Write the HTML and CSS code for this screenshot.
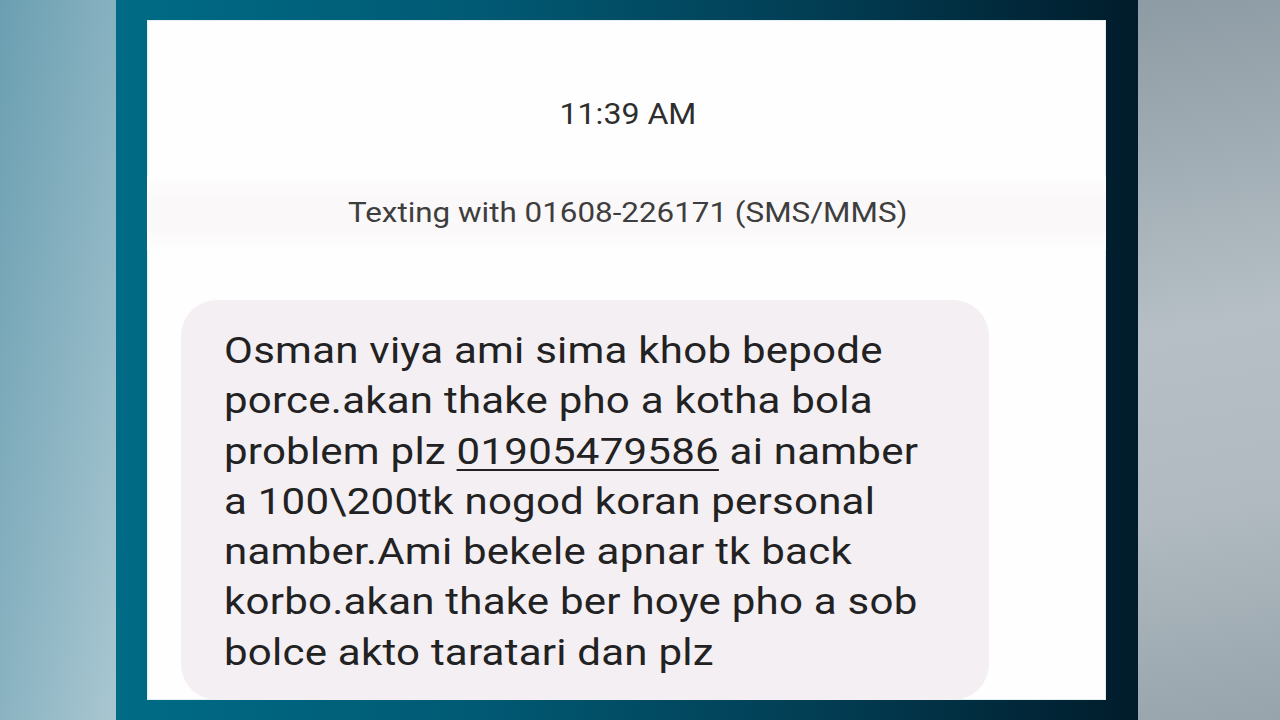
FILE: index.html
```html
<!DOCTYPE html>
<html>
<head>
<meta charset="utf-8">
<link rel="stylesheet" href="styles.css">
</head>
<body>
<div class="stage">
  <div class="bg-left"></div>
  <div class="frame">
    <div class="panel">
      <div class="time"><span class="time-text">11:39 AM</span></div>
      <div class="texting"><span class="texting-text">Texting with 01608-226171 (SMS/MMS)</span></div>
      <div class="bubble">
        <p class="msg">Osman viya ami sima khob bepode<br>porce.akan thake pho a kotha bola<br>problem plz <span class="num">01905479586</span> ai namber<br>a 100\200tk nogod koran personal<br>namber.Ami bekele apnar tk back<br>korbo.akan thake ber hoye pho a sob<br>bolce akto taratari dan plz</p>
      </div>
    </div>
  </div>
  <div class="bg-right"></div>
</div>
</body>
</html>
```
FILE: styles.css
```css
html, body {
  margin: 0;
  padding: 0;
  width: 1280px;
  height: 720px;
  overflow: hidden;
}
.stage {
  display: flex;
  width: 1280px;
  height: 720px;
}
.bg-left {
  width: 116px;
  flex: none;
  background: linear-gradient(100deg, #6a9fb1 0%, #8fb6c4 60%, #a9c7d1 100%);
}
.frame {
  width: 1022px;
  flex: none;
  box-sizing: border-box;
  padding: 20px 32px 20px 31px;
  background: linear-gradient(90deg, #006b86 0%, #015a74 35%, #023c52 70%, #011c2b 100%);
  display: flex;
}
.bg-right {
  flex: 1;
  background: linear-gradient(170deg, #8d9ba4 0%, #b5bfc5 45%, #b0bac0 70%, #97a4ac 100%);
}
.panel {
  flex: 1;
  background: #fefefe;
  box-shadow: inset 0 0 0 1px #e2eff3;
  display: flex;
  flex-direction: column;
  align-items: stretch;
  overflow: hidden;
  font-family: Roboto, "Noto Sans", sans-serif;
}
.time {
  margin-top: 76px;
  height: 36px;
  line-height: 36px;
  text-align: center;
  font-size: 30px;
  color: #2e2e2e;
}
.time-text {
  display: inline-block;
  transform: scaleX(1.07);
  margin-left: 2px;
}
.texting {
  margin-top: 44px;
  height: 74px;
  line-height: 74px;
  text-align: center;
  font-size: 28px;
  color: #3e3e3e;
  background: linear-gradient(180deg, #fefefe 0%, #fbf8f9 30%, #fbf8f9 70%, #fefefe 100%);
}
.texting-text {
  display: inline-block;
  transform: scaleX(1.12);
  margin-left: 2px;
}
.bubble {
  margin: 50px 0 0 34px;
  width: 808px;
  height: 400px;
  box-sizing: border-box;
  background: #f4eff3;
  border-radius: 36px;
  padding: 26px 0 0 43px;
  flex: none;
}
.msg {
  margin: 0;
  font-size: 36px;
  line-height: 50.3px;
  color: #222;
  letter-spacing: 0.2px;
  transform: scaleX(1.167);
  transform-origin: left top;
}
.num {
  text-decoration: underline;
  text-decoration-thickness: 2px;
  text-underline-offset: 5px;
}
```
